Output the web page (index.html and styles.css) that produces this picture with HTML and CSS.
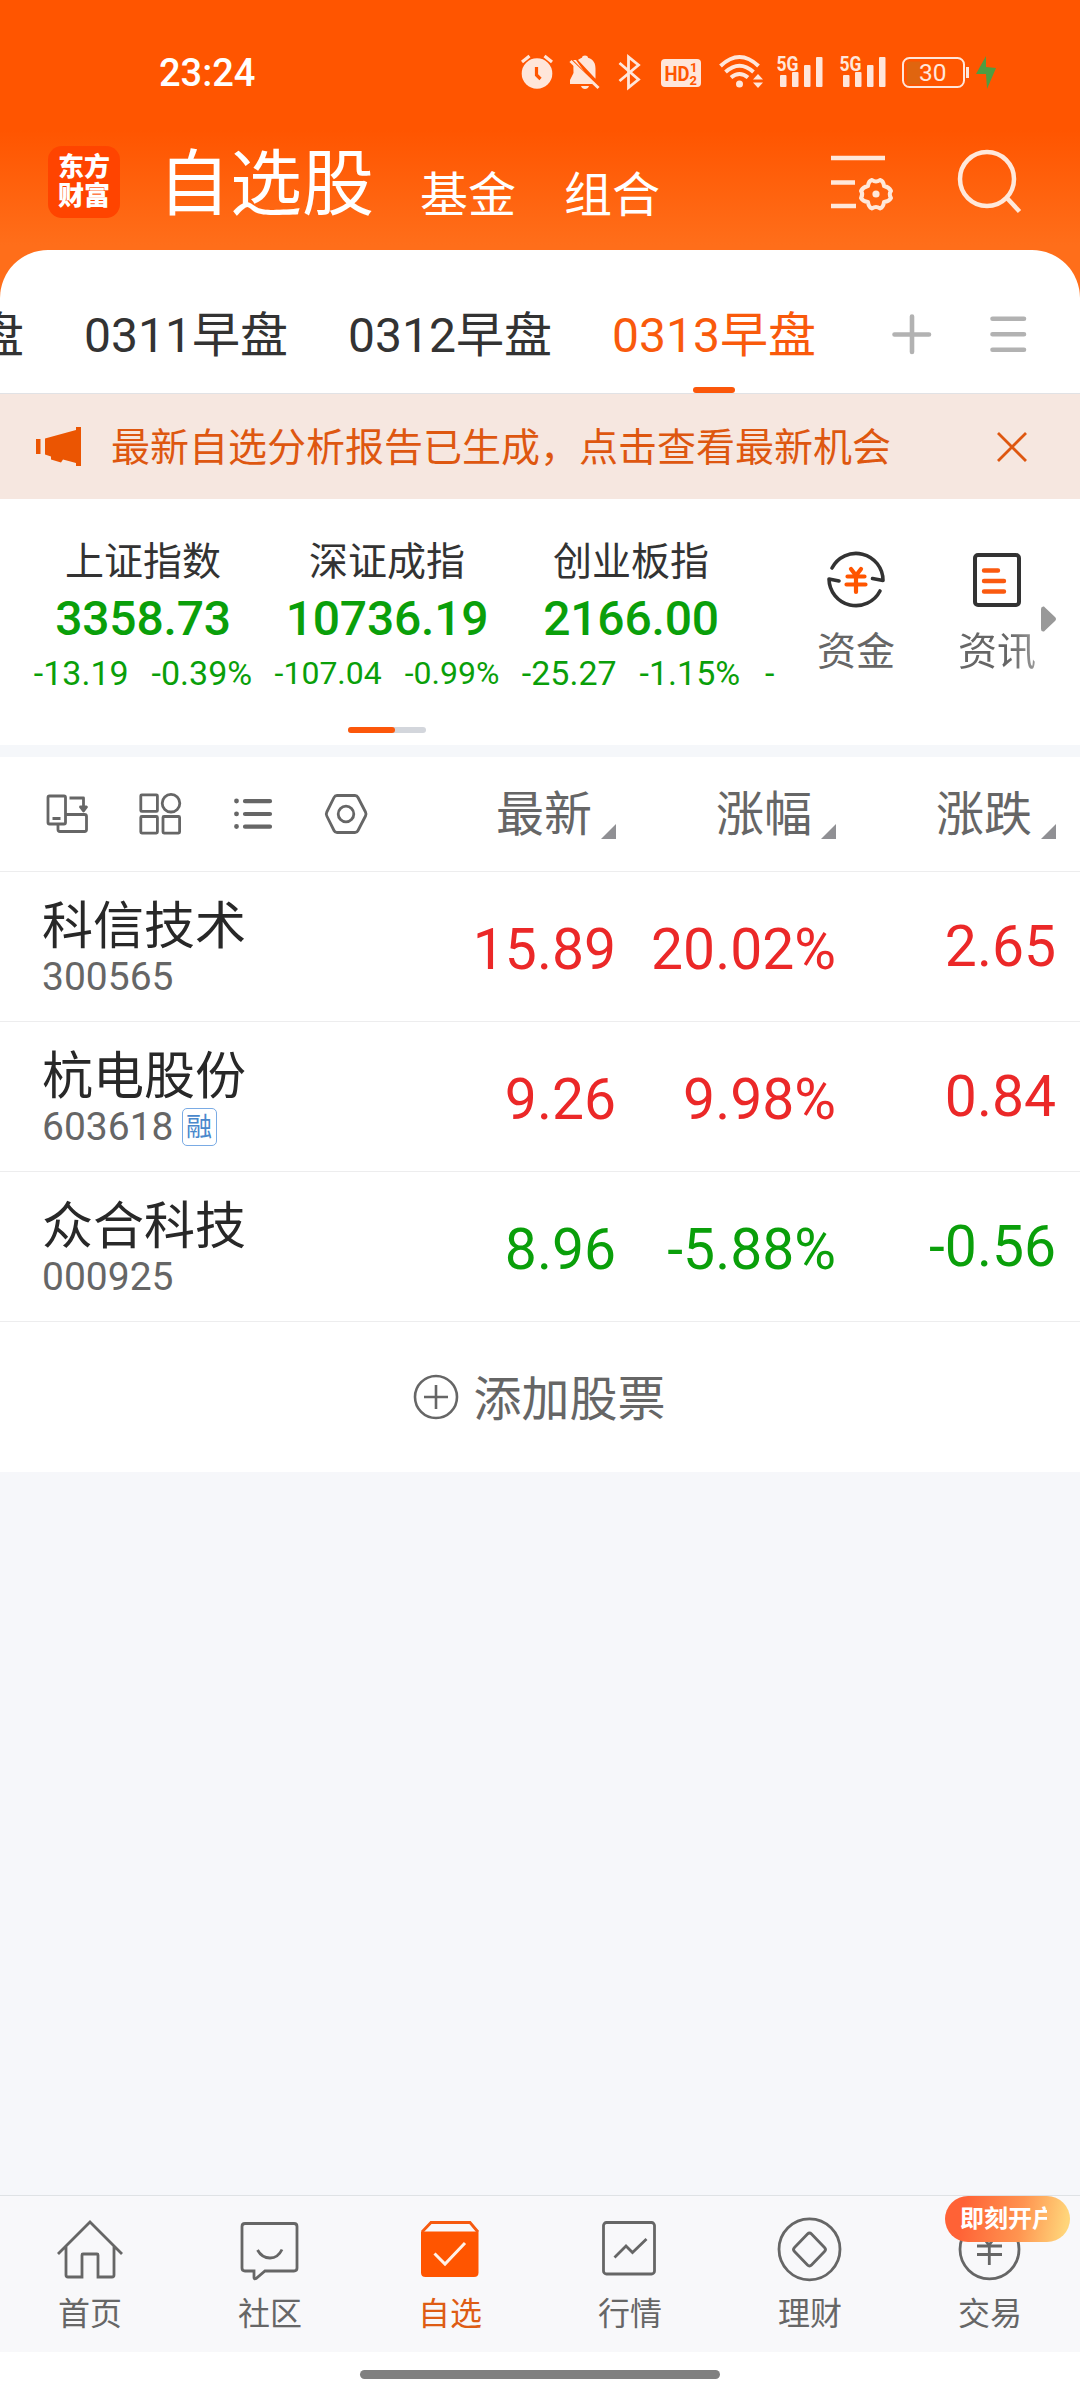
FILE: index.html
```html
<!DOCTYPE html>
<html lang="zh-CN">
<head>
<meta charset="utf-8">
<title>自选股</title>
<link rel="stylesheet" href="styles.css">
</head>
<body>
<header class="top">
  <div class="status">
    <span class="clock">23:24</span>
    <svg class="status-icons" width="480" height="40" viewBox="520 52 480 40">
      <g fill="#ffe6da">
        <circle cx="537" cy="73.500" r="15.300"/>
        <path d="M522 62l7.500-6M552 62l-7.500-6" stroke="#ffe6da" stroke-width="3.200"/>
        <path d="M536.500 67v8l4 4" fill="none" stroke="#ff5500" stroke-width="3.200"/>
        <path d="M576 60l-5-0 3 3c-1 3-.5 6-.5 10l-3.500 7v4h23zM578 60c1-1 3-2 4-2.300 0-3 6-3 6 0 6 2 7.500 6 7.500 11v10zM581 86h8c-1 4-7 4-8 0z"/>
        <path d="M568 57l32 32" stroke="#ff5500" stroke-width="3"/>
        <path d="M570.500 61l28 27" stroke="#ffe6da" stroke-width="3"/>
        <rect x="661" y="59" width="40" height="28" rx="4"/>
      </g>
      <path d="M619.500 63l19 16.500-10 8V57l10 8-19 16" fill="none" stroke="#ffe6da" stroke-width="2.800"/>
      <g fill="#ff5500" font-family="Roboto, sans-serif" font-weight="700">
        <text x="664.500" y="80.500" font-size="21" textLength="25" lengthAdjust="spacingAndGlyphs">HD</text>
        <text x="690" y="72" font-size="13">1</text>
        <text x="689.500" y="84.500" font-size="13">2</text>
      </g>
      <g fill="none" stroke="#ffe6da" stroke-width="4">
        <path d="M720.500 66q19-18 38 0M725.500 72q14-12.500 28 0M731 77.500q8.500-7 17 0"/>
      </g>
      <path d="M736 84a3.500 3.500 0 1 1 7 0a3.500 3.500 0 1 1-7 0M753 79.500l5-5.500 5 5.500zM753 82.500h10l-5 5.500z" fill="#ffe6da"/>
      <g id="signal" fill="#ffe6da">
        <text x="776.500" y="70.500" font-family="Roboto, sans-serif" font-weight="700" font-size="21" textLength="22" lengthAdjust="spacingAndGlyphs">5G</text>
        <rect x="780" y="75" width="6.500" height="12" rx="1"/><rect x="792" y="72" width="6.500" height="15" rx="1"/>
        <rect x="804" y="65" width="6.500" height="22" rx="1"/><rect x="816" y="57" width="6.500" height="30" rx="1"/>
      </g>
      <use href="#signal" x="63"/>
      <rect x="907" y="61.500" width="13" height="23" fill="#e0650f"/>
      <rect x="903" y="58" width="61" height="29" rx="6.500" fill="none" stroke="#ffe6da" stroke-width="2"/>
      <rect x="966" y="67" width="3" height="11" fill="#ffe6da"/>
      <text x="919" y="81" font-family="Roboto, sans-serif" font-size="24.500" fill="#ffe6da">30</text>
      <path d="M986 56l-10 18h10l1 15 9-21-10-1z" fill="#4f9d42"/>
    </svg>
  </div>
  <nav class="titlebar">
    <div class="logo"><span>东方</span><span>财富</span></div>
    <h1>自选股</h1>
    <a class="sub">基金</a>
    <a class="sub">组合</a>
    <svg class="tools" width="196" height="72" viewBox="829 146 196 72" fill="none" stroke="#ffe8da">
      <path d="M831 158h54M831 182.500h24M831 206h25" stroke-width="4.500"/>
      <path d="M872 180q4 3 8 0q3.500 1 4 6q5 1 7 5q-2.500 3 0 7q-2 3.500-7 4q-.5 5-4 6.500q-4-3-8 0q-3.500-1.500-4-6.500q-5-.5-7-4q2.500-4 0-7q2-4 7-5q.5-5 4-6z" stroke-width="4" stroke-linejoin="round"/>
      <circle cx="876" cy="194" r="3.600" fill="#ffe8da" stroke="none"/>
      <circle cx="987" cy="179" r="27" stroke-width="4.500"/><path d="M1006.500 197.500l13 14" stroke-width="4.500"/>
    </svg>
  </nav>
</header>

<section class="groups">
  <div class="group-list">
    <a>0310早盘</a><a>0311早盘</a><a>0312早盘</a><a class="on">0313早盘</a>
  </div>
  <svg width="140" height="48" viewBox="889 309 140 48" stroke="#b2b2b2" stroke-width="4.600" stroke-linecap="round">
    <path d="M894.500 333.500h34.500M912 315.500v35.500M992.500 317.800h31.500M992.500 333.300h31.500M992.500 348.800h31.500"/>
  </svg>
</section>

<section class="notice">
  <svg width="46" height="40" viewBox="36 427 46 40" fill="#eb5502"><path d="M36 439h4.500v15H36zM45 438.500l31-8.500v-3h5v39h-5v-3l-13-3.500-2 3-10-3v-3l-6-2z"/></svg>
  <p>最新自选分析报告已生成，点击查看最新机会</p>
  <svg width="32" height="32" viewBox="0 0 32 32" stroke="#de5710" stroke-width="2.800"><path d="M2 2l28 28M30 2L2 30"/></svg>
</section>

<section class="market">
  <div class="indices">
    <div class="index"><span class="name">上证指数</span><strong>3358.73</strong><span class="diff"><i>-13.19</i><i>-0.39%</i></span></div>
    <div class="index"><span class="name">深证成指</span><strong>10736.19</strong><span class="diff small"><i>-107.04</i><i>-0.99%</i></span></div>
    <div class="index"><span class="name">创业板指</span><strong>2166.00</strong><span class="diff"><i>-25.27</i><i>-1.15%</i></span></div>
    <div class="next">-</div>
    <div class="pager"><span></span></div>
  </div>
  <div class="links">
    <a class="link">
      <svg width="60" height="60" viewBox="0 0 60 60" fill="none" stroke="#333" stroke-width="3.600" stroke-linecap="round" stroke-linejoin="round">
        <path d="M6 18A27 27 0 0 1 57 30.500L46.500 28.500M54 41A27 27 0 0 1 3 29L13 31"/>
        <path d="M25 19l5 6.500 5-6.500M21.500 26.500h17M20.500 34.500h19M30 26v16" stroke="#ff5500" stroke-width="4.200"/>
      </svg>
      <span>资金</span>
    </a>
    <a class="link">
      <svg width="60" height="60" viewBox="0 0 60 60" fill="none" stroke="#333" stroke-width="4" stroke-linecap="round">
        <rect x="8" y="5" width="44" height="50" rx="3"/>
        <path d="M17 20.500h14M17 31h20M17 41.500h20" stroke="#fa5a10" stroke-width="4.400"/>
      </svg>
      <span>资讯</span>
    </a>
  </div>
  <svg class="more" width="16" height="26" viewBox="0 0 16 26" fill="#999"><path d="M0 3q0-3 3-2.500L4.500 2 14 11q2 2 0 4L4.500 24 3 25.500Q0 26 0 23z"/></svg>
</section>

<section class="table">
  <div class="row head">
    <svg width="326" height="44" viewBox="44 792 326 44" fill="none" stroke="#666" stroke-width="2.800" stroke-linejoin="round">
      <rect x="48" y="796" width="17.500" height="28" rx="1.500"/><path d="M52.500 818.500h8M69.500 798h14v12M66 814.500h18.500q2 0 2 2v13q0 2-2 2H60q-2 0-2-2v-5"/><path d="M80.500 807l3 4 3-4z" fill="#666"/>
      <rect x="140.800" y="794.800" width="16.600" height="16.600" rx="1"/><circle cx="171" cy="803.200" r="8.800"/><rect x="140.800" y="816.500" width="16.600" height="16.600" rx="1"/><rect x="163" y="816.500" width="16.600" height="16.600" rx="1"/>
      <path d="M236.500 801v.1M236.500 813.800v.1M236.500 826.500v.1" stroke-width="4.800" stroke-linecap="round"/><path d="M245 801.200h25M245 814h25M245 826.700h25" stroke-width="4.200" stroke-linecap="round"/>
      <path d="M337 795.500h18q2 0 3 2l7.500 14.500q1 2 0 4L358 830.500q-1 2-3 2h-18q-2 0-3-2L326.800 816q-1-2 0-4L334 797.500q1-2 3-2z"/><circle cx="346" cy="814" r="7.800"/>
    </svg>
    <span class="sort">最新</span><span class="sort">涨幅</span><span class="sort">涨跌</span>
  </div>
  <div class="row up"><div class="stock"><b>科信技术</b><small>300565</small></div><span class="num">15.89</span><span class="num">20.02%</span><span class="num delta">2.65</span></div>
  <div class="row up"><div class="stock"><b>杭电股份</b><small>603618<em>融</em></small></div><span class="num">9.26</span><span class="num">9.98%</span><span class="num delta">0.84</span></div>
  <div class="row down"><div class="stock"><b>众合科技</b><small>000925</small></div><span class="num">8.96</span><span class="num">-5.88%</span><span class="num delta">-0.56</span></div>
  <div class="add">
    <svg width="46" height="46" viewBox="0 0 46 46" fill="none" stroke="#666" stroke-width="2.600"><circle cx="23" cy="23" r="21"/><path d="M11 23h24M23 11v24"/></svg>
    <span>添加股票</span>
  </div>
</section>

<nav class="tabbar">
  <a><svg width="66" height="66" viewBox="57 2216 66 66"><path d="M58 2254l32-32 32 32M66 2246v29q0 2 2 2h14v-22q0-1 1-1h14q1 0 1 1v22h14q2 0 2-2v-29"/></svg><span>首页</span></a>
  <a><svg width="66" height="66" viewBox="237 2216 66 66"><path d="M245 2223.500h49q3 0 3 3v41.500q0 3-3 3h-29l-9 7.500q-2 1-2-1v-6.500h-9q-3 0-3-3v-41.500q0-3 3-3zM257.500 2250q4.500 8 12.500 8t12-8.500"/></svg><span>社区</span></a>
  <a class="on"><svg width="66" height="66" viewBox="417 2216 66 66"><path d="M421 2231.500h57.500v41q0 4.500-4.500 4.500h-48.500q-4.500 0-4.500-4.500z" fill="#ff5500" stroke="none"/><path d="M422 2232l9-9.500h39l8 9.500" stroke="#f65a10"/><path d="M434.500 2253.500l10.500 10.500 20-21" stroke="#fff1e8" stroke-width="3"/></svg><span>自选</span></a>
  <a><svg width="66" height="66" viewBox="597 2216 66 66"><rect x="603.500" y="2222.500" width="51" height="51.500" rx="3"/><path d="M614.500 2257.500l11.500-11.500 6.500 6.500 14-13.500"/></svg><span>行情</span></a>
  <a><svg width="66" height="66" viewBox="777 2216 66 66"><circle cx="809.500" cy="2249.300" r="30.500"/><path d="M807.500 2234q2-2 4 0l13 13.500q2 2 0 4l-13 13.500q-2 2-4 0l-13-13.500q-2-2 0-4z"/></svg><span>理财</span></a>
  <a class="trade"><svg width="66" height="66" viewBox="957 2216 66 66"><circle cx="989.500" cy="2249.300" r="29.500"/><path d="M981 2235l8 10 8-10M977 2246h25M977 2254.500h25M989.300 2245v20"/></svg><span>交易</span><div class="promo"><span>即刻开户</span></div></a>
</nav>
<footer class="home"><span></span></footer>
</body>
</html>
```
FILE: styles.css
```css
* { box-sizing: border-box; }
body {
  margin: 0;
  width: 1080px;
  height: 2400px;
  display: flex;
  flex-direction: column;
  overflow: hidden;
  background: #f6f7fa;
  color: #333;
  font-family: Roboto, "Noto Sans CJK SC", sans-serif;
}
svg { display: block; flex: none; }

.top { height: 300px; flex: none; background: linear-gradient(#ff5500 130px, #ff6e1a 245px); color: #fff; }
.status { height: 144px; padding: 52px 80px 0 159px; display: flex; justify-content: space-between; }
.clock { font-size: 38px; font-weight: 500; line-height: 43px; }
.titlebar { display: flex; padding: 2px 55px 0 48px; }
.logo {
  width: 72px; height: 72px; margin-right: 38px; padding-top: 7px;
  border-radius: 14px; background: #ff4400;
  display: flex; flex-direction: column; align-items: center;
  font-size: 26px; font-weight: 900; line-height: 29px;
}
.titlebar h1 { margin: 0 46px 0 0; font-size: 72px; font-weight: 400; line-height: 77px; }
.sub { margin-right: 48px; padding-top: 20px; font-size: 48px; line-height: 60px; white-space: nowrap; }
.tools { margin-left: auto; }

.groups {
  height: 143px; flex: none; margin-top: -50px; padding: 28px 51px 0 0;
  display: flex; align-items: center; justify-content: space-between;
  background: #fff; border-radius: 48px 48px 0 0; overflow: hidden;
}
.group-list { display: flex; gap: 60px; margin-left: -180px; font-size: 48px; line-height: 115px; white-space: nowrap; }
.group-list a { width: 204px; }
.group-list .on { color: #f95a0c; position: relative; }
.group-list .on::after {
  content: ""; position: absolute; left: 81px; bottom: 0;
  width: 42px; height: 6px; border-radius: 3px; background: #fb570a;
}
.groups svg { margin-top: -4px; }

.notice {
  height: 106px; flex: none; padding: 0 52px 0 36px; display: flex; align-items: center;
  background: #f6e7e0; border-top: 1px solid #e1e2e5; color: #de5710;
}
.notice p { margin: 2px auto 0 29px; font-size: 39px; line-height: 60px; }

.market { height: 258px; flex: none; display: flex; background: #fff; border-bottom: 12px solid #f5f7fa; }
.indices { width: 776px; padding: 35px 0 0 21px; display: grid; grid-template-columns: 244px 244px 244px 20px; grid-template-rows: 166px 50px; overflow: hidden; }
.index { display: flex; flex-direction: column; align-items: center; color: #0a9f0a; white-space: nowrap; }
.index .name { font-size: 39px; line-height: 56px; color: #333; }
.index strong { font-size: 48px; font-weight: 500; line-height: 58px; letter-spacing: -0.2px; }
.diff { display: flex; gap: 23px; font-size: 34px; line-height: 50px; }
.diff.small { font-size: 32px; }
.diff i { font-style: normal; }
.next { padding: 114px 0 0 12px; font-size: 34px; line-height: 50px; color: #0a9f0a; }
.pager { grid-column: 1 / 4; justify-self: center; width: 78px; height: 6px; margin-top: 27px; border-radius: 3px; background: #d3d6dc; }
.pager span { display: block; width: 47px; height: 6px; border-radius: 3px; background: #fc570a; }
.links { display: flex; gap: 63px; padding: 51px 0 0 41px; color: #666; font-size: 39px; line-height: 50px; }
.link { width: 78px; display: flex; flex-direction: column; align-items: center; gap: 17px; }
.link:last-child span { background: linear-gradient(90deg, #666 65%, #999); background-clip: text; color: transparent; }
.more { margin: 107px 0 0 5px; }

.table { background: #fff; flex: none; }
.row { height: 150px; display: grid; grid-template-columns: 1fr 220px 220px 220px; padding-right: 24px; border-bottom: 1px solid #ededee; }
.head { height: 115px; padding-left: 44px; align-items: center; }
.sort { display: flex; justify-content: flex-end; align-items: center; padding-top: 2px; font-size: 48px; line-height: 60px; color: #666; }
.sort::after { content: ""; margin: 33px 0 0 9px; width: 15px; height: 15px; background: #909094; clip-path: polygon(100% 0, 100% 100%, 0 100%); }
.stock { padding: 25px 0 0 42px; display: flex; flex-direction: column; }
.stock b { font-size: 51px; font-weight: 400; line-height: 60px; color: #282828; }
.stock small { display: flex; font-size: 39px; line-height: 41px; color: #666; }
.stock em {
  margin: 1px 0 0 8px; width: 35px; height: 38px; border: 1.5px solid #7aabe4; border-radius: 5px;
  font-size: 26px; line-height: 36px; font-style: normal; color: #4a88cc; text-align: center;
}
.num { padding-top: 7px; font-size: 57px; line-height: 142px; text-align: right; }
.delta { padding-top: 4px; }
.up { color: #eb2828; }
.down { color: #0a9f0a; }
.add { height: 150px; display: flex; justify-content: center; align-items: center; gap: 14px; padding-right: 1px; color: #666; font-size: 48px; line-height: 60px; }
.add span { padding-top: 5px; }

.tabbar { height: 157px; flex: none; margin-top: auto; display: flex; background: #f8f8fa; border-top: 1px solid #dfe2e5; color: #666; }
.tabbar a { width: 180px; padding-top: 20px; display: flex; flex-direction: column; align-items: center; position: relative; font-size: 32px; line-height: 40px; }
.tabbar a > span { margin-top: 12px; }
.tabbar svg { fill: none; stroke: #666; stroke-width: 2.8; }
.tabbar .on { color: #de5c14; }
.promo {
  position: absolute; left: 45px; top: 0; width: 125px; height: 46px; padding: 3px 0 0 15px; border-radius: 23px;
  background: linear-gradient(100deg, #ff6236 15%, #ff9450 60%, #ffd57a 95%);
  color: #fff; font-size: 24px; font-weight: 700;
}
.promo span { display: block; width: 87px; overflow: hidden; white-space: nowrap; }
.home { height: 48px; flex: none; padding-top: 18px; background: #fff; }
.home span { display: block; width: 360px; height: 9px; margin: 0 auto; border-radius: 5px; background: #808080; }
```
